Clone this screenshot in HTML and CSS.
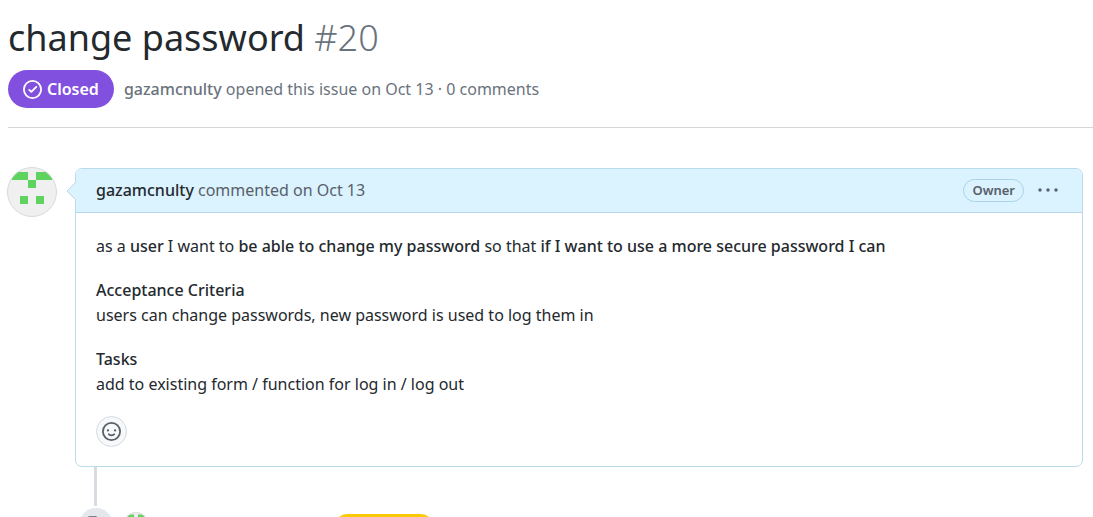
FILE: index.html
```
<!DOCTYPE html>
<html lang="en">
<head>
<meta charset="utf-8">
<title>change password · Issue #20</title>
<link rel="stylesheet" href="styles.css">
</head>
<body>
<header class="issue-header">
  <h1 class="issue-title">change password <span class="issue-number">#20</span></h1>
  <div class="issue-meta">
    <span class="state">
      <svg class="state-icon" viewBox="0 0 16 16" aria-hidden="true"><path fill-rule="evenodd" d="M1.5 8a6.5 6.5 0 1113 0 6.500 6.500 0 01-13 0zM8 0a8 8 0 100 16A8 8 0 008 0zm3.780 6.280a.75.75 0 00-1.060-1.060L7 8.940 5.780 7.720a.75.75 0 00-1.060 1.060l1.750 1.750a.75.75 0 001.060 0l4.250-4.250z"/></svg>
      Closed
    </span>
    <p class="summary"><a class="author" href="#author">gazamcnulty</a> opened this issue on Oct 13 · 0 comments</p>
  </div>
</header>
<main class="discussion">
  <svg class="avatar" viewBox="0 0 50 50" role="img" aria-label="gazamcnulty">
    <defs><clipPath id="round"><circle cx="25" cy="25" r="24.500"/></clipPath></defs>
    <g id="identicon" clip-path="url(#round)">
      <path fill="#f0f0f0" d="M0 0h50v50H0z"/>
      <path fill="#5fd35f" d="M5 5h16v8H5zM29 5h16v8H29zM21 13h8v8h-8zM13 29h8v8h-8zM29 29h8v8h-8z"/>
    </g>
    <circle cx="25" cy="25" r="24.500" fill="none" stroke="#d9d9db"/>
  </svg>
  <div class="thread">
    <article class="comment">
      <header class="comment-header">
        <svg class="pointer" viewBox="0 0 10 20" aria-hidden="true"><path class="pointer-fill" d="M10 1L1 10l9 9z"/><path class="pointer-edge" d="M9.500 1.500L1 10l8.500 8.500"/></svg>
        <p class="byline"><a class="author" href="#author">gazamcnulty</a> commented on Oct 13</p>
        <span class="owner">Owner</span>
        <button class="menu" type="button" aria-label="Show options"><svg viewBox="0 0 20 20" aria-hidden="true"><circle cx="2" cy="9" r="1.700"/><circle cx="10" cy="9" r="1.700"/><circle cx="18" cy="9" r="1.700"/></svg></button>
      </header>
      <div class="comment-body">
        <p>as a <strong>user</strong> I want to <strong>be able to change my password</strong> so that <strong>if I want to use a more secure password I can</strong></p>
        <p><strong>Acceptance Criteria</strong><br>users can change passwords, new password is used to log them in</p>
        <p><strong>Tasks</strong><br>add to existing form / function for log in / log out</p>
        <button class="react" type="button" aria-label="Add a reaction"><svg viewBox="0 0 16 16" aria-hidden="true"><path fill-rule="evenodd" d="M1.5 8a6.500 6.500 0 1113 0 6.500 6.500 0 01-13 0zM8 0a8 8 0 100 16A8 8 0 008 0zM5 8a1 1 0 100-2 1 1 0 000 2zm7-1a1 1 0 11-2 0 1 1 0 012 0zM5.320 9.636a.75.75 0 011.038.175l.007.009c.103.118.22.222.35.310.264.178.683.370 1.285.370.602 0 1.020-.192 1.285-.371.130-.088.247-.192.350-.310l.007-.008a.75.75 0 111.222.870l-.614-.431c.614.430.614.431.613.431v.001l-.001.002-.002.003-.005.007-.014.019a1.984 1.984 0 01-.184.213c-.160.166-.338.316-.530.445-.630.418-1.370.638-2.127.629-.946 0-1.652-.308-2.126-.630a3.320 3.320 0 01-.715-.657l-.014-.020-.005-.006-.002-.003v-.002h-.001l.613-.432-.614.430a.75.75 0 01.183-1.044z"/></svg></button>
      </div>
    </article>
    <div class="rail"></div>
    <div class="event">
      <span class="event-badge"><svg viewBox="0 0 16 16" aria-hidden="true"><path fill-rule="evenodd" d="M2.500 7.775V2.750a.25.25 0 01.25-.25h5.025a.25.25 0 01.177.073l6.250 6.250a.25.25 0 010 .354l-5.025 5.025a.25.25 0 01-.354 0l-6.250-6.250a.25.25 0 01-.073-.177zm-1.500 0V2.750C1 1.784 1.784 1 2.750 1h5.025c.464 0 .910.184 1.238.513l6.250 6.250a1.750 1.750 0 010 2.474l-5.026 5.026a1.750 1.750 0 01-2.474 0l-6.250-6.250A1.750 1.750 0 011 7.775zM6 5a1 1 0 100 2 1 1 0 000-2z"/></svg></span>
      <svg class="event-avatar" viewBox="0 0 50 50" aria-hidden="true"><use href="#identicon"/><circle cx="25" cy="25" r="24" fill="none" stroke="#d9d9db" stroke-width="2"/></svg>
      <span class="label"></span>
    </div>
  </div>
</main>
</body>
</html>
```
FILE: styles.css
```
* {
  box-sizing: border-box;
}

body {
  margin: 0;
  height: 100vh;
  overflow: hidden;
  background: #fff;
  color: #24292e;
  font: 16px/25px "Noto Sans", sans-serif;
}

p {
  margin: 0;
}

strong,
.author {
  font-weight: 500;
}

a {
  color: inherit;
  text-decoration: none;
}

svg {
  display: block;
  fill: currentColor;
}

button {
  padding: 0;
  font: inherit;
}

.issue-header {
  margin-left: 8px;
  padding: 13px 0 19px;
  border-bottom: 1px solid #d5d7da;
}

.issue-title {
  margin: 0 0 7px;
  font-size: 36px;
  line-height: 50px;
  font-weight: 400;
}

.issue-number {
  color: #6a737d;
  font-weight: 300;
}

.issue-meta {
  display: flex;
  align-items: center;
  gap: 10px;
  color: #6a737d;
}

.state {
  display: flex;
  align-items: center;
  gap: 5px;
  height: 38px;
  padding: 0 15px;
  border-radius: 19px;
  background: #8250df;
  color: #fff;
  font-weight: 600;
}

.state-icon {
  width: 19px;
  height: 19px;
}

.discussion {
  display: flex;
  align-items: flex-start;
  gap: 18px;
  padding: 40px 10px 0 7px;
}

.avatar {
  flex: none;
  width: 50px;
  height: 50px;
  margin-top: -1px;
}

.thread {
  flex: 1;
}

.comment {
  border: 1px solid #b9dbec;
  border-radius: 7px;
}

.comment-header {
  position: relative;
  display: flex;
  align-items: center;
  height: 44px;
  padding: 0 24px 0 20px;
  border-bottom: 1px solid #b9d7ea;
  border-radius: 6px 6px 0 0;
  background: #dbf2ff;
  color: #586069;
}

.pointer {
  position: absolute;
  top: 12px;
  left: -10px;
  width: 10px;
  height: 20px;
}

.pointer-fill {
  fill: #dbf2ff;
}

.pointer-edge {
  fill: none;
  stroke: #b9d7ea;
}

.byline {
  flex: 1;
}

.byline .author {
  color: #24292e;
}

.owner {
  padding: 0 8px;
  border: 1px solid #a9d3e8;
  border-radius: 12px;
  font-size: 13px;
  line-height: 21px;
  font-weight: 600;
}

.menu {
  margin-left: 14px;
  border: 0;
  background: none;
  color: #586069;
}

.menu svg {
  width: 20px;
  height: 20px;
}

.comment-body {
  display: flex;
  flex-direction: column;
  align-items: flex-start;
  gap: 19px;
  padding: 21px 20px 19px;
}

.react {
  display: grid;
  place-items: center;
  width: 31px;
  height: 31px;
  border: 1px solid #d4dae1;
  border-radius: 50%;
  background: #f6f8fa;
  color: #586069;
}

.react svg {
  width: 19px;
  height: 19px;
}

.rail {
  width: 3px;
  height: 39px;
  margin-left: 19px;
  background: #d8dbe1;
}

.event {
  display: flex;
  align-items: flex-start;
  margin: 2px 0 0 4px;
}

.event-badge {
  display: grid;
  place-items: center;
  width: 34px;
  height: 34px;
  border-radius: 50%;
  background: #e4e7eb;
  color: #586069;
}

.event-badge svg {
  width: 20px;
  height: 20px;
}

.event-avatar {
  width: 24px;
  height: 24px;
  margin: 4px 0 0 11px;
}

.label {
  width: 98px;
  height: 24px;
  margin: 6px 0 0 187px;
  border-radius: 12px;
  background: #fbca04;
}
```
